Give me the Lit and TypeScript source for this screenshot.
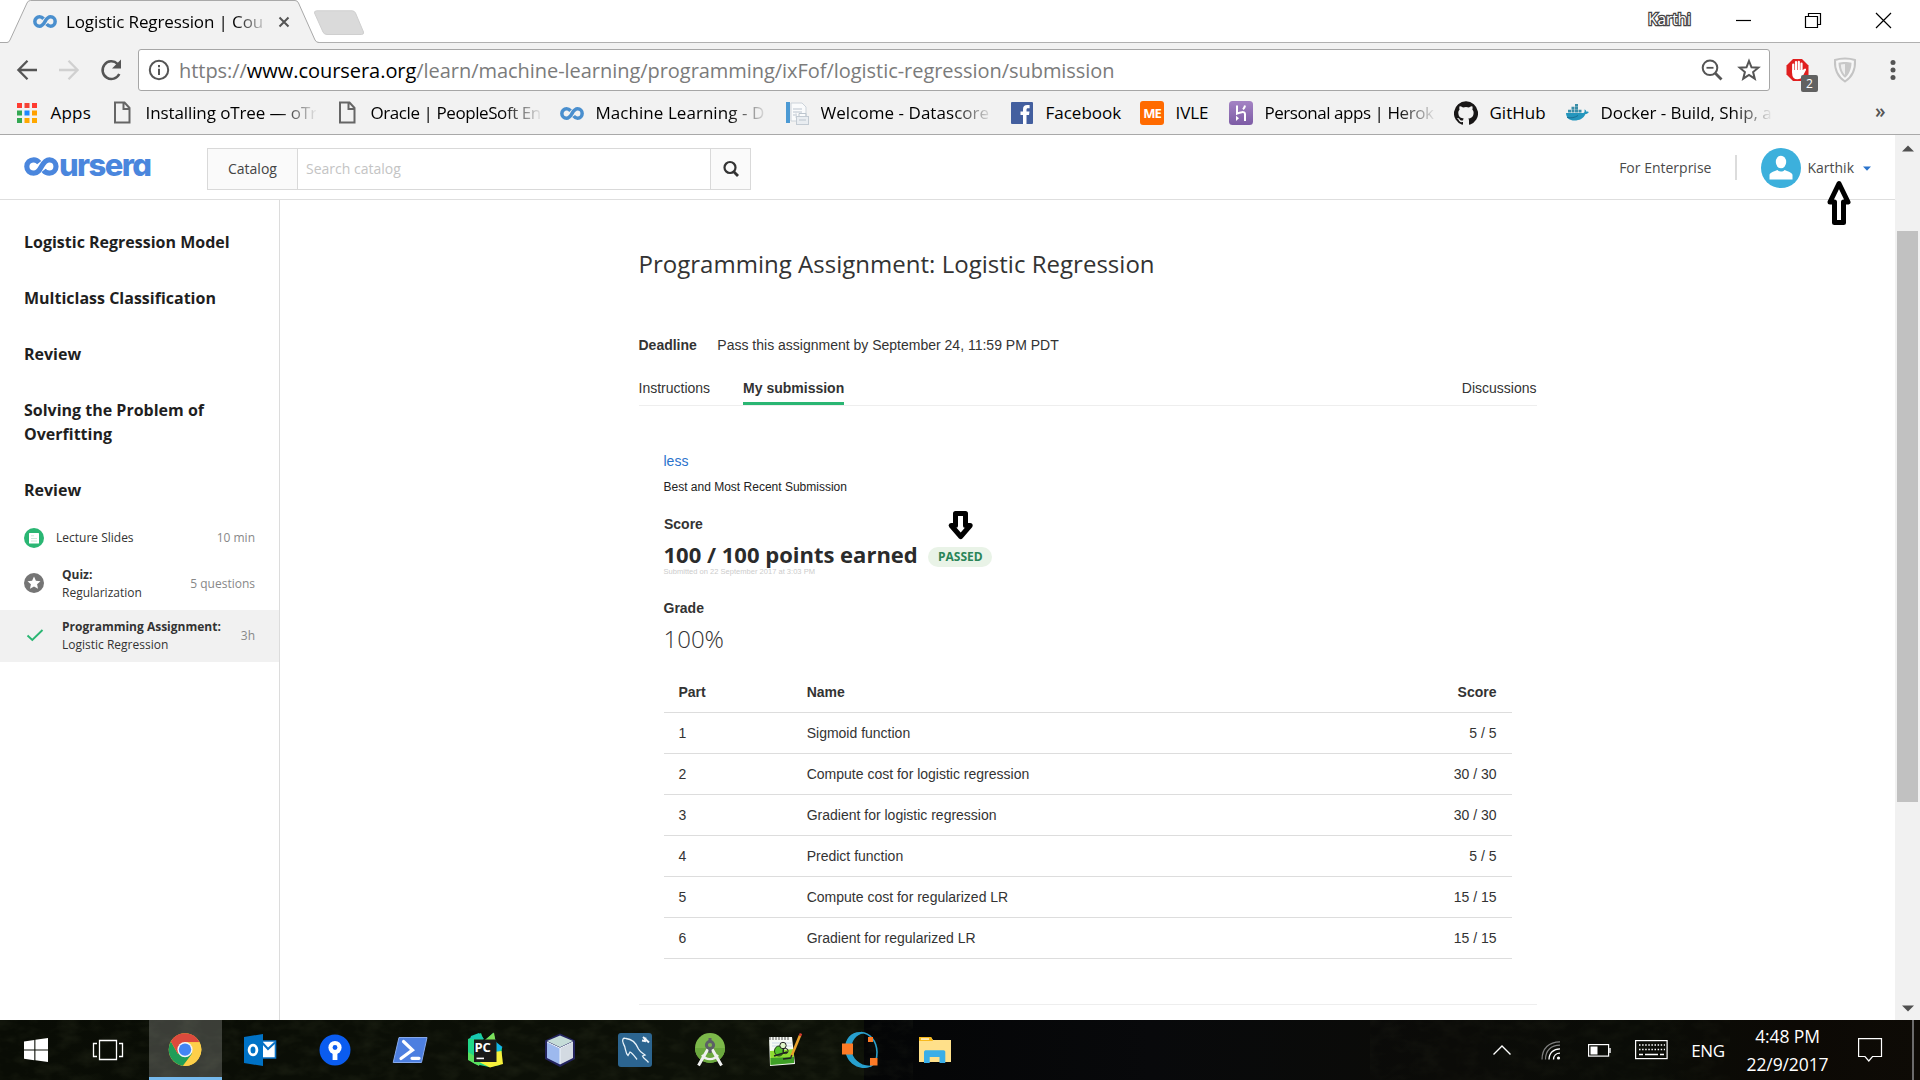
import { LitElement, html, css, svg, TemplateResult } from "lit";
import { customElement } from "lit/decorators.js";
import { classMap } from "lit/directives/class-map.js";

const ic = (w: number, h: number, body: unknown, vb = `0 0 ${w} ${h}`) =>
  html`<svg width=${w} height=${h} viewBox=${vb} fill="none">${body}</svg>`;

const infinity = (w: number, h: number, color: string, sw: number) =>
  ic(w, h, svg`<path d="M13.2 4.6C11.6 2.8 9.9 2.2 8.2 2.2C4.8 2.2 2.3 4.7 2.3 8C2.3 11.3 4.8 13.8 8.2 13.8C11.6 13.8 13 11.4 15 8C17 4.6 18.8 2.2 22 2.2C25.3 2.2 27.7 4.8 27.7 8C27.7 11.2 25.3 13.8 22 13.8C19.8 13.8 18.2 12.8 17 11.2" stroke=${color} stroke-width=${sw}/>`, "0 0 30 16");

const docIcon = ic(24, 24, svg`<path d="M5 1.5H14.5L19.5 7V21.5H5Z M13.5 2V8H19" stroke="#666" stroke-width="2"/>`);

const appsIcon = ic(24, 24, svg`
  <rect x="2" y="2" width="5" height="5" fill="#ff3b30"/><rect x="9.5" y="2" width="5" height="5" fill="#f44336"/><rect x="17" y="2" width="5" height="5" fill="#ff3b30"/>
  <rect x="2" y="9.5" width="5" height="5" fill="#34a853"/><rect x="9.5" y="9.5" width="5" height="5" fill="#1e88ff"/><rect x="17" y="9.5" width="5" height="5" fill="#ffa000"/>
  <rect x="2" y="17" width="5" height="5" fill="#34a853"/><rect x="9.5" y="17" width="5" height="5" fill="#ffa800"/><rect x="17" y="17" width="5" height="5" fill="#ffa800"/>`);

const welcomeIcon = ic(24, 24, svg`
  <rect x="1" y="1" width="4" height="21" fill="#4c9ad4"/><path d="M6 2H17L21 6V20H6Z" fill="#fafbfc" stroke="#ccd3da"/>
  <path d="M8 8H17M8 11H17M8 14H12" stroke="#cfd6dd" stroke-width="1.5"/><path d="M11 10V17" stroke="#d6dce2"/>
  <rect x="11.5" y="15.5" width="12" height="8" fill="#e9edf1" stroke="#c3cbd3"/><path d="M14 15V12.5H21V15M14 19H21" stroke="#bcc5ce"/>`);

const facebookIcon = ic(24, 24, svg`<rect x="1" y="1" width="22" height="22" rx="1" fill="#435f9f"/>
  <path d="M13 23V14H10.5V10.5H13V8.2C13 5.3 14.6 4 17.2 4H19.6V7.3H18C16.8 7.3 16.5 7.9 16.5 8.9V10.5H19.5L19 14H16.5V23Z" fill="#fff"/>`);

const herokuIcon = ic(24, 24, svg`<defs><linearGradient id="hk" x1="0" y1="0" x2="0" y2="1"><stop offset="0" stop-color="#a483c4"/><stop offset="1" stop-color="#7d5ca5"/></linearGradient></defs>
  <rect width="24" height="24" rx="3.5" fill="url(#hk)"/><path d="M8 4.5V12.6C10.5 11.4 16 9.8 16 13V20M16 4.5C15.8 6 15 7.4 14 8.4" stroke="#fff" stroke-width="2"/><path d="M7 14.8L10 17.3L7 19.9Z" fill="#fff"/>`);

const githubIcon = ic(24, 24, svg`<path fill="#181616" d="M12 .3a12 12 0 0 0-3.8 23.4c.6.1.8-.3.8-.6v-2c-3.3.7-4-1.6-4-1.6-.6-1.4-1.4-1.8-1.4-1.8-1-.7.1-.7.1-.7 1.2 0 1.9 1.2 1.9 1.2 1 1.8 2.8 1.3 3.5 1 0-.8.4-1.3.7-1.6-2.7-.3-5.5-1.3-5.5-6 0-1.2.5-2.3 1.3-3.1-.2-.4-.6-1.6 0-3.2 0 0 1-.3 3.4 1.2a11.5 11.5 0 0 1 6 0c2.3-1.5 3.3-1.2 3.3-1.2.6 1.6.2 2.8 0 3.2.9.8 1.3 1.9 1.3 3.2 0 4.6-2.8 5.6-5.5 5.9.5.4.9 1 .9 2.2v3.3c0 .3.1.7.8.6A12 12 0 0 0 12 .3"/>`);

const dockerIcon = ic(24, 24, svg`<path d="M1 12H18C19.5 12 20 10.5 19.4 8.6C20.6 9 21.2 9.8 21.3 10.7C22.3 10.3 23.2 10.5 23.8 11C23 12.6 21.6 13 20.5 13C18.5 17.5 14.5 19.5 9.5 19.5C4.5 19.5 1.2 17 1 12Z" fill="#2496bd"/>
  <path d="M3 8.8H6V11.5H3ZM6.5 8.8H9.5V11.5H6.5ZM10 8.8H13V11.5H10ZM13.5 8.8H16.5V11.5H13.5ZM6.5 5.8H9.5V8.4H6.5ZM10 5.8H13V8.4H10ZM10 3H13V5.4H10Z" fill="#3b8ea8"/><path d="M2 16.5C6 17.5 10 16.5 13 14.5" stroke="#1b6f93"/>`);

type Mark = { icon: TemplateResult; label: string; ls: number; fade?: boolean };
const bookmarks: Mark[] = [
  { icon: appsIcon, label: "Apps", ls: 0.2 },
  { icon: docIcon, label: "Installing oTree — oTr", ls: -0.1, fade: true },
  { icon: docIcon, label: "Oracle | PeopleSoft En", ls: -0.42, fade: true },
  { icon: infinity(24, 15, "#4a8fce", 4.4), label: "Machine Learning - D", ls: 0.05, fade: true },
  { icon: welcomeIcon, label: "Welcome - Datascore", ls: 0.05, fade: true },
  { icon: facebookIcon, label: "Facebook", ls: 0 },
  { icon: html`<span class="me">ME</span>`, label: "IVLE", ls: -0.1 },
  { icon: herokuIcon, label: "Personal apps | Herok", ls: -0.45, fade: true },
  { icon: githubIcon, label: "GitHub", ls: 0 },
  { icon: dockerIcon, label: "Docker - Build, Ship, a", ls: -0.05, fade: true },
];

const sidebarHeads = ["Logistic Regression Model", "Multiclass Classification", "Review", "Solving the Problem of Overfitting", "Review"];

const parts: [string, string][] = [
  ["Sigmoid function", "5 / 5"],
  ["Compute cost for logistic regression", "30 / 30"],
  ["Gradient for logistic regression", "30 / 30"],
  ["Predict function", "5 / 5"],
  ["Compute cost for regularized LR", "15 / 15"],
  ["Gradient for regularized LR", "15 / 15"],
];

const taskIcons: TemplateResult[] = [
  // Start
  ic(36, 36, svg`<path d="M6 9.4L16.3 8V17.4H6ZM17.4 7.8L30 6V17.4H17.4ZM6 18.6H16.3V28.2L6 26.8ZM17.4 18.6H30V30L17.4 28.3Z" fill="#fff"/>`),
  // Task view
  ic(36, 36, svg`<path d="M9.5 8.5H26.5V27.5H9.5ZM7 11.5H3.5V24.5H7M29 11.5H32.5V24.5H29" stroke="#fff" stroke-width="1.3"/>`),
  // Chrome
  ic(36, 36, svg`<circle cx="18" cy="17.6" r="16.3" fill="#fcc934"/>
    <path d="M18 17.6L10.8 21.8L3.9 9.4A16.3 16.3 0 0 0 15.8 33.8L25.1 21.7Z" fill="#1f9d58"/>
    <path d="M3.9 9.4A16.3 16.3 0 0 1 32.5 10.2H18L10.8 21.8Z" fill="#dc4a3d"/><path d="M18 10.2H32.5A16.3 16.3 0 0 1 16.5 33.9L25.1 21.7Z" fill="#fdcf4a"/>
    <circle cx="18" cy="17.6" r="7.6" fill="#f4f6fa"/><circle cx="18" cy="17.6" r="6.2" fill="#4285f4"/>`),
  // Outlook
  ic(36, 36, svg`<path d="M19 9H33.5V26H19Z" fill="#fff" stroke="#0a72c6" stroke-width="1.6"/><path d="M20 10.5L26 17L33 10.5" stroke="#0a72c6" stroke-width="2"/>
    <path d="M2 5L21 2V34L2 31Z" fill="#0072c6"/><ellipse cx="11" cy="18" rx="3.9" ry="4.9" stroke="#fff" stroke-width="2.8"/>`),
  // SourceTree
  ic(36, 36, svg`<circle cx="18" cy="18" r="15.5" fill="#0a5cf0"/><circle cx="18" cy="15.5" r="6.6" fill="#fff"/><circle cx="18" cy="15.5" r="2.4" fill="#0a5cf0"/><path d="M15.6 20H20.4V28H15.6Z" fill="#fff"/>`),
  // PowerShell
  ic(36, 36, svg`<path d="M7 5.5H35L29.5 30.5H1.2Z" fill="#4d7fe0" stroke="#86a9ec"/><path d="M11.5 9.5L20.5 18L9 26.5M20 26.3H27" stroke="#fff" stroke-width="3.2" stroke-linecap="round"/>`),
  // PyCharm
  html`<span class="stack">${ic(36, 36, svg`<path d="M1 7L14 1L17 9L26 1L30 12L35 16L33 33L22 35L8 32L1 27Z" fill="#21d789"/><path d="M4 4L12 1L17 7H3Z" fill="#18c9b0"/><path d="M18 8L27 .5L29 12Z" fill="#7ee05a"/><path d="M29 10L35.5 15L30 22Z" fill="#14b5ea"/>
    <path d="M27 20L34.5 19L36 32L23 35.5L12 30Z" fill="#f7f13c"/><path d="M1 20L1 28L12 34L14 28Z" fill="#5be05e"/><rect x="7" y="7.5" width="22.5" height="22.5" fill="#1a1a1a"/><path d="M9.5 26.4H17" stroke="#fff" stroke-width="1.6"/>`)}<b class="pc">PC</b></span>`,
  // NetBeans
  ic(36, 36, svg`<path d="M18 1.5L33 8.5V27L18 35L3 27V8.5Z" fill="#23235e"/><path d="M18 3.5L31 9L18 15.2L5 9Z" fill="#c5dcd8"/><path d="M5 10L18 16.2V32.5L5 26Z" fill="#9db9ee"/><path d="M31 10L18 16.2V32.5L31 26Z" fill="#d3dae2"/><path d="M5 10L18 16.2L31 10M18 16V32" stroke="#eef4fb"/>`),
  // MySQL Workbench
  ic(36, 36, svg`<rect x="1" y="1" width="34" height="34" rx="3" fill="#2c6590"/><path d="M6.5 12C4.5 7.5 6 5.5 9 6.5C15 7 19 11 21.5 17C23 20 26 21.5 28 23L25.5 24C26.5 26.5 30 28.5 31.5 30.5M6.5 12C9 15.5 8 21 11 23.5L13 20C16 21.5 18 25 20 27.5" stroke="#e8f2f8" stroke-width="1.3"/>
    <path d="M26 5L32 10.5M25 8.5L28 9L28.5 5.5" stroke="#f2f6fa" stroke-width="2"/>`),
  // Android Studio
  ic(36, 36, svg`<circle cx="18" cy="16" r="15" fill="#7cb84a"/><path d="M3 16A15 15 0 0 0 33 16Z" fill="#6ba83e"/><path d="M16 17L6.5 33.5M20 17L29.5 33.5" stroke="#f1f1f1" stroke-width="3"/><path d="M10 23C14 28.5 22 28.5 26 23" stroke="#f1f1f1" stroke-width="2.4"/>
    <circle cx="18" cy="13" r="3.6" stroke="#5c6066" stroke-width="3"/><path d="M18 6V9M18 17V21" stroke="#5c6066" stroke-width="3"/>`),
  // Notepad++
  ic(36, 36, svg`<path d="M2 5H25L28 32L3 34Z" fill="#f6faf4"/><path d="M3 19L27 17L27 30.5L3.5 32.5Z" fill="#8fdc32"/><path d="M3.5 26L27 25V31L3.5 33Z" fill="#3e9f26"/><path d="M3 5V8M6 5V8M9 5V8M12 5V8M15 5V8M18 5V8M21 5V8" stroke="#555"/>
    <path d="M5 11H25M5 14H25" stroke="#c9d8e6"/><ellipse cx="12" cy="19" rx="4.5" ry="5" fill="#57c22c" stroke="#1e3d12"/><circle cx="16" cy="13.5" r="3.2" fill="#dff5c8" stroke="#222"/><circle cx="18.5" cy="19" r="2.6" stroke="#222"/><path d="M7 24L20 20M16 27L24 26" stroke="#222" stroke-width="1.5"/>
    <path d="M33 3.5L24.5 24" stroke="#e8a12b" stroke-width="2.6"/><path d="M34 1.5L33 4" stroke="#d03b2f" stroke-width="2.6"/><path d="M24.8 23L23.6 26.5" stroke="#333" stroke-width="1.4"/>`),
  // Octave
  ic(38, 38, svg`<path d="M20 1.5C29 2 35.500 10 36 21C36.200 28 34 33 29 35.500" stroke="#2ba0cc" stroke-width="1.600"/><path fill-rule="evenodd" d="M20 1C10 .5 4 8 4 17.500C4 28 13 37.500 24 37C27 36.800 29.500 36 31.500 34.500C20 36 11 28 10.500 18.500C10 10 15 3.500 22.500 2.200Z" fill="#27a0cf"/>
    <rect x="1" y="12.500" width="11" height="11" fill="#fd7a26"/><rect x="27" y="6" width="5" height="5" fill="#fd7a26"/><rect x="29" y="27" width="7.500" height="7.500" fill="#fd7a26"/>`),
  // Explorer
  ic(36, 36, svg`<path d="M2 5H14L16 8H34V30H2Z" fill="#ffe08a"/><path d="M2 5H14L16 9H2Z" fill="#f8b91c"/><rect x="4" y="6.3" width="8" height="1.5" fill="#fff6d8"/><path d="M7 31V20C7 18.8 8 18.2 9 18.2H26.5C27.6 18.2 28.3 19 28.3 20V31H22.5V25H12.7V31Z" fill="#3aaee8"/>`),
];

const hiddenIcons = ic(24, 24, svg`<path d="M3.5 16.5L12 8L20.5 16.5" stroke="#fff" stroke-width="1.4"/>`);
const wifiIcon = ic(24, 24, svg`<circle cx="19.5" cy="20" r="1.6" fill="#fff"/><path d="M14.5 21.5C14.5 17.5 17 15.2 21 15.2M10 21.5C10 15 14.5 10.8 21 10.8" stroke="#fff" stroke-width="1.3"/><path d="M6.5 21.5C6.5 12.5 12 7.2 21 7.2M3 21.5C3 10.5 10 3.8 21 3.8" stroke="#808080" stroke-width="1.2"/>`);
const batteryIcon = ic(24, 24, svg`<rect x="1.6" y="6.6" width="20" height="11.5" stroke="#fff" stroke-width="1.2"/><rect x="3.5" y="8.5" width="7" height="8" fill="#fff"/><path d="M23 10V15" stroke="#fff" stroke-width="1.4"/>`);
const keyboardIcon = ic(34, 24, svg`<rect x="1.6" y="2.6" width="31.5" height="18" stroke="#fff" stroke-width="1.2"/><path d="M5 7H31M5 11.5H31" stroke="#fff" stroke-width="1.4" stroke-dasharray="1.5 1.6"/><path d="M5 16.5H9M11 16.5H24M26 16.5H30" stroke="#fff" stroke-width="1.4"/>`);
const actionIcon = ic(26, 28, svg`<path d="M1.6 2.6H24.5V20.5H15.5L11.8 25L8 20.5H1.6Z" stroke="#fff" stroke-width="1.2"/>`);

@customElement("browser-chrome")
class BrowserChrome extends LitElement {
  static styles = css`
    :host { display: block; height: 135px; background: #f2f2f2; color: #000; font-family: "Open Sans", "Noto Sans", sans-serif; box-shadow: inset 0 -1px #a9a9a9; }
    svg { display: block; flex: none; }
    .strip { height: 43px; box-sizing: border-box; background: #fff; border-bottom: 1px solid #b0b0b0; display: flex; }
    .tab { position: relative; width: 311px; height: 43px; display: flex; align-items: center; padding-left: 33px; box-sizing: border-box; flex: none; }
    .shape { position: absolute; left: 0; top: 0; }
    .tab .fav, .tab .title, .tab .close { position: relative; }
    .title { margin-left: 9px; width: 206px; font-size: 17px; line-height: 26px; letter-spacing: -0.12px; white-space: nowrap; -webkit-mask-image: linear-gradient(to right, #000 168px, transparent 204px); }
    .newtab { margin-top: 10px; margin-left: 2px; }
    .user { margin-left: auto; width: 46px; font-size: 15.5px; line-height: 38px; letter-spacing: -0.1px; color: #fff; -webkit-text-stroke: 2.5px #444; paint-order: stroke fill; }
    .ctl { display: flex; align-items: flex-start; padding-top: 9px; gap: 46px; margin-left: 36px; margin-right: 26px; }
    .tools { height: 54px; display: flex; align-items: center; box-sizing: border-box; padding-left: 15px; }
    .nav { display: flex; gap: 18px; }
    .url { margin-left: 15px; width: 1632px; height: 42px; box-sizing: border-box; border: 1px solid #a6a6a6; border-radius: 3px; background: #fff; display: flex; align-items: center; padding: 0 8px; }
    .addr { margin-left: 8px; flex: 1; font-size: 20px; letter-spacing: -0.045px; color: #7b7b7b; white-space: nowrap; }
    .host { color: #000; }
    .urlicons { display: flex; gap: 13px; }
    .ext { position: relative; margin-left: 15px; }
    .count { position: absolute; left: 16px; top: 17px; width: 17px; height: 17px; background: #616161; color: #fff; border-radius: 2px; font-size: 12px; line-height: 18px; text-align: center; }
    .shield { margin-left: 23px; }
    .menu { margin-left: 24px; }
    .marks { height: 32px; display: grid; grid-template-columns: 95px 225px 225px 225px 225px 130px 89px 225px 111px 310px auto; padding-left: 15px; align-items: center; font-size: 17px; }
    .mark { display: flex; align-items: center; gap: 11.5px; white-space: nowrap; }
    .mark .label { line-height: 26px; }
    .fade { width: 170px; overflow: hidden; -webkit-mask-image: linear-gradient(to right, #000 132px, transparent 172px); }
    .me { width: 24px; height: 24px; border-radius: 3px; background: #ff6a00; color: #fff; font-weight: 700; font-size: 13px; line-height: 24px; text-align: center; letter-spacing: -1px; }
    .more { font-size: 19px; font-weight: 600; color: #555; line-height: 24px; margin-top: -4px; }
  `;
  render() {
    return html`
      <div class="strip">
        <div class="tab">
          <svg class="shape" width="320" height="43"><path d="M0 42.5H7Q9 42.5 10 40L27 3Q28 .5 30.500 .5H295Q297.500 .5 298.500 3L315 40Q316.200 42.500 319 42.500V43H0Z" fill="#f2f2f2"/><path d="M0 42.500H7Q9 42.500 10 40L27 3Q28 .5 30.500 .5H295Q297.500 .5 298.500 3L315 40Q316.200 42.500 319 42.500" fill="none" stroke="#a9a9a9"/></svg>
          <span class="fav">${infinity(24, 15, "#4a8fce", 4.4)}</span>
          <span class="title">Logistic Regression | Cou</span>
          <span class="close">${ic(24, 24, svg`<path d="M10 8L19 17M19 8L10 17" transform="translate(-2.5 -.5)" stroke="#555" stroke-width="2"/>`)}</span>
        </div>
        <svg class="newtab" width="52" height="26"><path d="M4 .8H39Q41.500 .8 42.500 3L50.500 22Q51 24.500 48.500 24.500H14Q11 24.500 10 22L1.500 3Q1 .8 4 .8Z" fill="#dadada" stroke="#cfcfcf"/></svg>
        <span class="user">Karthi</span>
        <div class="ctl">
          ${ic(24, 22, svg`<path d="M6 11.500H21" stroke="#000" stroke-width="1.2"/>`)}
          ${ic(24, 22, svg`<path d="M5.500 7.500H17.500V18.500H5.500ZM8.500 7.500V4.500H20.500V15.500H17.500" stroke="#000" stroke-width="1.2"/>`)}
          ${ic(24, 22, svg`<path d="M6 4L21 19M21 4L6 19" stroke="#000" stroke-width="1.2"/>`)}
        </div>
      </div>
      <div class="tools">
        <div class="nav">
          ${ic(24, 24, svg`<path d="M22 12H4M12.500 2.800L3.400 12L12.500 21.200" stroke="#555" stroke-width="2.300"/>`)}
          ${ic(24, 24, svg`<path d="M2 12H20M11.500 2.800L20.600 12L11.500 21.200" stroke="#d0d0d0" stroke-width="2.300"/>`)}
          ${ic(24, 24, svg`<path d="M20.300 16A8.800 8.800 0 1 1 18.500 5.800" stroke="#555" stroke-width="2.500"/><path d="M22 1.500V10.500H13Z" fill="#555"/>`)}
        </div>
        <div class="url">
          ${ic(24, 24, svg`<circle cx="12" cy="12" r="9.200" stroke="#555" stroke-width="2"/><path d="M12 10.800V17M12 7V9.200" stroke="#555" stroke-width="2"/>`)}
          <span class="addr">https://<span class="host">www.coursera.org</span>/learn/machine-learning/programming/ixFof/logistic-regression/submission</span>
          <div class="urlicons">
            ${ic(24, 24, svg`<circle cx="10" cy="9.800" r="7.300" stroke="#555" stroke-width="2"/><path d="M15.300 15.300L21.500 21.500" stroke="#555" stroke-width="2.800"/><path d="M6.500 9.800H13.500" stroke="#555" stroke-width="1.800"/>`)}
            ${ic(24, 24, svg`<path d="M12 3L14.500 9.300L21.300 9.700L16.100 14L17.800 20.700L12 17L6.200 20.700L7.900 14L2.700 9.700L9.500 9.300Z" stroke="#555" stroke-width="2"/>`)}
          </div>
        </div>
        <span class="ext">${ic(25, 24, svg`<path d="M8 1H17L23.500 7.500V16.500L17 23H8L1.500 16.500V7.500Z" fill="#e01f1f"/><path d="M8.200 14V6.500M11 12V4M13.800 12V3.800M16.500 13V5.500" stroke="#fff" stroke-width="2.200" stroke-linecap="round"/><path d="M7.100 12H17.600L20 10.500Q21.500 10.500 21 12L17 19.500Q15.500 21.300 12.500 21.300Q7.100 21.300 7.100 15Z" fill="#fff"/>`)}<span class="count">2</span></span>
        <span class="shield">${ic(24, 26, svg`<path d="M12 1.500C15 1.500 19 2 22 3C22.500 12 19 20 12 24.500C5 20 1.500 12 2 3C5 2 9 1.500 12 1.500Z" fill="#f7f7f7" stroke="#c4c4c4" stroke-width="2"/><path d="M12 5C14.500 5 16.500 5.200 18.500 5.800C18.500 12 16 17.500 12 20.800C8 17.500 5.500 12 5.500 5.800C7.500 5.200 9.500 5 12 5Z" fill="#c8c8c8"/><path d="M12 7V18C9.500 15.500 8 12 7.800 7.500Z" fill="#eee"/>`)}</span>
        <span class="menu">${ic(24, 24, svg`<circle cx="12" cy="4.500" r="2.500" fill="#555"/><circle cx="12" cy="12" r="2.500" fill="#555"/><circle cx="12" cy="19.500" r="2.500" fill="#555"/>`)}</span>
      </div>
      <div class="marks">
        ${bookmarks.map((b) => html`<div class="mark">${b.icon}<span class=${classMap({ label: true, fade: !!b.fade })} style="letter-spacing:${b.ls}px">${b.label}</span></div>`)}
        <span class="more">»</span>
      </div>`;
  }
}

@customElement("course-header")
class CourseHeader extends LitElement {
  static styles = css`
    :host { display: flex; height: 65px; box-sizing: border-box; border-bottom: 1px solid #dedede; align-items: center; padding-left: 24px; font: 14px/22px "Open Sans", "Noto Sans", sans-serif; color: #4a4a4a; }
    svg { display: block; }
    .logo { display: flex; align-items: center; width: 183px; flex: none; color: #4a86dd; }
    .word { font: 800 31px/34px Inter, "Open Sans", sans-serif; font-feature-settings: "cv11"; letter-spacing: -1.6px; margin-left: -1px; margin-top: -5px; }
    .mark { margin-top: -1px; }
    .search { display: flex; width: 544px; height: 42px; margin-top: 4px; box-sizing: border-box; border: 1px solid #d9d9d9; line-height: 40px; }
    .cat { width: 90px; box-sizing: border-box; padding-left: 20px; background: #fafafa; border-right: 1px solid #d9d9d9; color: #444; }
    .ph { flex: 1; padding-left: 8px; color: #c4c4c4; }
    .go { width: 40px; box-sizing: border-box; border-left: 1px solid #d9d9d9; background: #fafafa; display: flex; align-items: center; justify-content: center; }
    .ent { margin-left: auto; margin-top: 2px; }
    .bar { width: 2px; height: 25px; background: #dcdcdc; margin: 1px 24px 0 24px; }
    .name { margin: 2px 9px 0 6px; }
    .ava { margin-top: 2px; }
    .caret { margin-right: 24px; margin-top: 2px; }
  `;
  render() {
    return html`
      <div class="logo"><span class="mark">${ic(36, 19, svg`<path d="M15.200 5.600C13.600 3.500 11.600 2.800 9.800 2.800C5.800 2.800 2.800 5.700 2.800 9.500C2.800 13.300 5.800 16.200 9.800 16.200C13.800 16.200 15.500 13.200 17.500 9.500C19.600 5.700 21.800 2.800 25.400 2.800C29.200 2.800 32 5.700 32 9.500C32 13.300 29.200 16.200 25.400 16.200C23 16.200 21 15.200 19.600 13.400" stroke="#4a86dd" stroke-width="5.200"/>`)}</span><span class="word">ursera</span></div>
      <div class="search"><span class="cat">Catalog</span><span class="ph">Search catalog</span>
        <span class="go">${ic(18, 18, svg`<circle cx="8" cy="7.500" r="5.500" stroke="#333" stroke-width="2.200"/><path d="M11.800 11.800L16 16" stroke="#333" stroke-width="2.800"/>`)}</span></div>
      <span class="ent">For Enterprise</span><span class="bar"></span>
      <span class="ava">${ic(40, 40, svg`<circle cx="20" cy="20" r="20" fill="#3cb0dc"/><ellipse cx="20" cy="14" rx="5.200" ry="6.300" fill="#fff"/><path d="M8.500 31.500V27C8.500 24.500 15 22.500 16.500 22C18 24 22 24 23.500 22C25 22.500 31.500 24.500 31.500 27V31.500Z" fill="#fff"/>`)}</span>
      <span class="name">Karthik</span>
      <span class="caret">${ic(8, 5, svg`<path d="M0 .5H8L4 4.700Z" fill="#2a73cc"/>`)}</span>`;
  }
}

@customElement("course-sidebar")
class CourseSidebar extends LitElement {
  static styles = css`
    :host { display: block; width: 280px; box-sizing: border-box; border-right: 1px solid #dcdcdc; padding-top: 30px; font: 12px/18px "Open Sans", "Noto Sans", sans-serif; color: #333; }
    svg { display: block; }
    .heads { display: flex; flex-direction: column; gap: 32px; padding: 0 45px 16px 24px; font-size: 16px; font-weight: 700; line-height: 24px; color: #1f1f1f; }
    .item { display: flex; align-items: center; height: 52px; padding: 0 24px; }
    .item.short { height: 40px; }
    .item.active { background: #f1f1f1; }
    .ico { width: 20px; flex: none; margin-top: -3px; }
    .text { margin-left: 18px; flex: 1; white-space: nowrap; }
    .short .text { margin-left: 12px; }
    .short .ico { margin-top: 0; }
    .kind { font-weight: 700; display: block; }
    .meta { color: #888; }
  `;
  render() {
    return html`
      <div class="heads">${sidebarHeads.map((h) => html`<div>${h}</div>`)}</div>
      <div class="item short"><span class="ico">${ic(20, 20, svg`<circle cx="10" cy="10" r="10" fill="#2ab673"/><rect x="5" y="5" width="10" height="10.500" rx=".5" fill="#fff"/><path d="M7 10.500H13M7 13H13M7 7.800H10" stroke="#c9ebda"/>`)}</span><span class="text">Lecture Slides</span><span class="meta">10 min</span></div>
      <div class="item"><span class="ico">${ic(20, 20, svg`<circle cx="10" cy="10" r="10" fill="#757575"/><path d="M10 3.500L11.900 7.700L16.500 8.200L13.100 11.300L14 15.800L10 13.500L6 15.800L6.900 11.300L3.500 8.200L8.100 7.700Z" fill="#fff"/>`)}</span><span class="text"><b class="kind">Quiz:</b>Regularization</span><span class="meta">5 questions</span></div>
      <div class="item active"><span class="ico">${ic(20, 20, svg`<path d="M3.500 10.500L8.300 15L18.500 5" stroke="#2ab673" stroke-width="1.900"/>`)}</span><span class="text"><b class="kind">Programming Assignment:</b>Logistic Regression</span><span class="meta">3h</span></div>`;
  }
}

@customElement("submission-view")
class SubmissionView extends LitElement {
  static styles = css`
    :host { display: block; width: 898px; margin-left: 358.500px; padding-top: 48px; font: 14px/20px "Liberation Sans", Arial, sans-serif; color: #333; }
    .title { font: 400 24px/32px "Open Sans", "Noto Sans", sans-serif; letter-spacing: 0.020px; color: #333; }
    .deadline { display: flex; gap: 20.500px; margin-top: 55px; }
    .tabs { display: flex; margin-top: 23px; border-bottom: 1px solid #eee; }
    .tabs span { padding-bottom: 4px; border-bottom: 3px solid transparent; }
    .tabs .on { font-weight: 700; margin-left: 33px; border-color: #2ab673; }
    .tabs .end { margin-left: auto; }
    .panel { padding: 45px 25px 45px; border-bottom: 1px solid #eee; }
    .less { color: #2a73cc; }
    .best { font-size: 12px; line-height: 16px; margin-top: 8px; color: #222; }
    .lbl { font-weight: 700; }
    .score { margin-top: 19px; padding-left: 0.5px; }
    .row { display: flex; align-items: center; height: 32px; margin-top: 4px; }
    .pts { font: 700 22px/32px "Open Sans", "Noto Sans", sans-serif; color: #2b2b2b; }
    .badge { margin-left: 10.500px; margin-top: 6px; width: 64px; height: 20px; border-radius: 10px; background: #e9f3e7; color: #2a8558; font: 700 12px/20px "Open Sans", "Noto Sans", sans-serif; text-align: center; }
    .when { font-size: 7.550px; line-height: 10px; color: #ccc; margin-top: -3px; }
    .grade { margin-top: 21px; }
    .pct { font: 300 24px/32px "Open Sans", "Noto Sans", sans-serif; margin-top: 5px; }
    .table { margin-top: 17px; }
    .tr { display: grid; grid-template-columns: 128.200px 1fr auto; height: 40px; line-height: 40px; padding: 0 15px; border-bottom: 1px solid #ddd; }
    .th { font-weight: 700; }
  `;
  render() {
    return html`
      <div class="title">Programming Assignment: Logistic Regression</div>
      <div class="deadline"><b>Deadline</b><span>Pass this assignment by September 24, 11:59 PM PDT</span></div>
      <div class="tabs"><span>Instructions</span><span class="on">My submission</span><span class="end">Discussions</span></div>
      <div class="panel">
        <div class="less">less</div>
        <div class="best">Best and Most Recent Submission</div>
        <div class="lbl score">Score</div>
        <div class="row"><span class="pts">100 / 100 points earned</span><span class="badge">PASSED</span></div>
        <div class="when">Submitted on 22 September 2017 at 3:03 PM</div>
        <div class="lbl grade">Grade</div>
        <div class="pct">100%</div>
        <div class="table">
          <div class="tr th"><span>Part</span><span>Name</span><span>Score</span></div>
          ${parts.map(([name, score], i) => html`<div class="tr"><span>${i + 1}</span><span>${name}</span><span>${score}</span></div>`)}
        </div>
      </div>`;
  }
}

@customElement("task-bar")
class TaskBar extends LitElement {
  static styles = css`
    :host { display: flex; position: relative; height: 60px; color: #fff; font: 18px/28px "Open Sans", "Noto Sans", sans-serif; overflow: hidden;
      background: linear-gradient(to right, #090c05 0, #0d1108 45%, #090b05 800px, #040506 830px, #08090b 1150px, #0b0b08 1450px, #0a0c07 1640px, #0c0905 1800px, #0e0b06 100%); }
    svg { display: block; }
    .leaves { position: absolute; inset: 0; opacity: 0.09; }
    .apps, .tray { position: relative; display: grid; height: 60px; }
    .apps { grid-template-columns: 72px 77px 73px repeat(10, 75px); }
    .app { display: flex; align-items: center; justify-content: center; }
    .app:nth-child(2) { padding-right: 5px; }
    .app.on { background: rgba(255, 255, 255, 0.2); box-shadow: inset 0 -3px #76b9ed; padding-right: 1px; }
    .stack { position: relative; }
    .pc { position: absolute; left: 8px; top: 8px; font: 700 13px/15px "Open Sans", sans-serif; letter-spacing: -0.2px; }
    .tray { margin-left: auto; grid-template-columns: 48px 50px 45px 59px 56px 103px 61px 20px; }
    .cell { display: flex; align-items: center; justify-content: center; }
    .eng { font-size: 17px; letter-spacing: -0.3px; padding-top: 1px; }
    .clock { flex-direction: column; font-size: 17.500px; letter-spacing: -0.100px; justify-content: flex-start; padding-top: 2px; }
    .edge { border-left: 2px solid #6b6b6b; margin-left: 12px; }
  `;
  render() {
    return html`
      <svg class="leaves" width="1920" height="60"><filter id="lf"><feTurbulence type="fractalNoise" baseFrequency="0.05 0.09" numOctaves="3" seed="4"/><feColorMatrix values="0 0 0 0 .32  0 0 0 0 .36  0 0 0 0 .16  1.800 0 0 0 -.700"/></filter><rect width="830" height="60" filter="url(#lf)"/><rect x="1400" width="300" height="60" filter="url(#lf)" opacity=".6"/></svg>
      <div class="apps">${taskIcons.map((t, i) => html`<span class=${classMap({ app: true, on: i === 2 })}>${t}</span>`)}</div>
      <div class="tray">
        <span class="cell">${hiddenIcons}</span><span class="cell">${wifiIcon}</span><span class="cell">${batteryIcon}</span><span class="cell">${keyboardIcon}</span>
        <span class="cell eng">ENG</span><span class="cell clock"><span>4:48 PM</span><span>22/9/2017</span></span><span class="cell">${actionIcon}</span><span class="edge"></span>
      </div>`;
  }
}

@customElement("app-root")
export class AppRoot extends LitElement {
  static styles = css`
    :host { display: flex; flex-direction: column; position: relative; width: 1920px; height: 1080px; background: #fff; overflow: hidden; }
    .view { flex: 1; display: grid; grid-template-columns: 1fr 25px; min-height: 0; }
    .page { display: grid; grid-template-rows: 65px 1fr; }
    .body { display: flex; }
    .scroll { background: #f1f1f1; display: flex; flex-direction: column; align-items: center; }
    .thumb { width: 21px; height: 571px; background: #c1c1c1; margin-top: 78px; }
    .up { margin-top: 10px; height: 8px; }
    .down { margin-top: auto; margin-bottom: 7px; height: 8px; }
    .scroll svg { display: block; }
    .arrow { position: absolute; }
    .a1 { left: 1824px; top: 177px; }
    .a2 { left: 944px; top: 508px; }
  `;
  render() {
    return html`
      <browser-chrome></browser-chrome>
      <div class="view">
        <div class="page">
          <course-header></course-header>
          <div class="body"><course-sidebar></course-sidebar><submission-view></submission-view></div>
        </div>
        <div class="scroll">
          <span class="up">${ic(12, 7, svg`<path d="M0 6.500L6 .5L12 6.500Z" fill="#505050"/>`)}</span>
          <span class="thumb"></span>
          <span class="down">${ic(12, 7, svg`<path d="M0 .5L6 6.500L12 .5Z" fill="#505050"/>`)}</span>
        </div>
      </div>
      <task-bar></task-bar>
      <svg class="arrow a1" width="30" height="50"><path d="M15 6.500L24 25H19.500V45.500H10.500V25H6Z" fill="#fff" stroke="#000" stroke-width="5" stroke-linejoin="round"/></svg>
      <svg class="arrow a2" width="32" height="36"><path d="M11.500 5.500H21.500V17.500H26.200L16.700 28.500L7.200 17.500H11.500Z" fill="#fff" stroke="#000" stroke-width="5" stroke-linejoin="round"/></svg>`;
  }
}
